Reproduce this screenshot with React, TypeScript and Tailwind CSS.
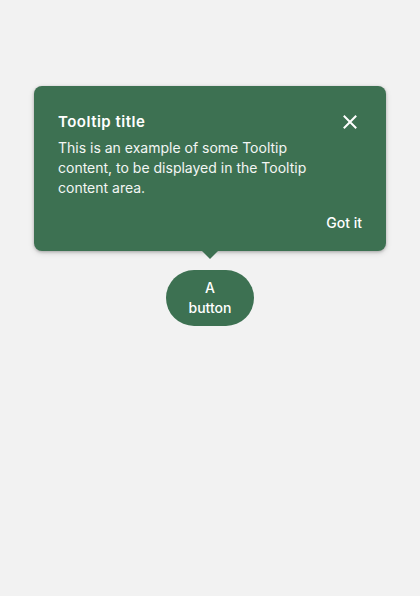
export default function App() {
  return (
    <div className="w-[420px] h-[596px] bg-[#f2f2f2] flex flex-col items-center pt-[86px]" style={{ fontFamily: 'Inter, Roboto, "Noto Sans", sans-serif' }}>
      <div className="relative w-[352px] rounded-[8px] bg-[#3d7152] text-white shadow-[0_1px_3px_rgba(0,0,0,0.25),0_2px_6px_rgba(0,0,0,0.12)] pt-[24px] pl-[24px] pr-[24px] pb-[11px]">
        <div className="flex items-center justify-between h-[24px]">
          <div className="text-[15px] font-semibold leading-[24px] tracking-[0.5px]">Tooltip title</div>
          <svg width="24" height="24" viewBox="0 0 24 24" fill="none" stroke="white" strokeWidth="2" strokeLinecap="square">
            <path d="M6.5 6.5 L17.5 17.5 M17.5 6.5 L6.5 17.5" />
          </svg>
        </div>
        <div className="mt-[4px] pr-[40px] text-[14px] leading-[20px] text-[#f3f6f4]">
          This is an example of some Tooltip content, to be displayed in the Tooltip content area.
        </div>
        <div className="flex justify-end mt-[6px]">
          <div className="h-[36px] flex items-center text-[14px] font-medium">Got it</div>
        </div>
        <div className="absolute left-1/2 -translate-x-1/2 top-full w-0 h-0 border-l-[8px] border-r-[8px] border-t-[8px] border-l-transparent border-r-transparent border-t-[#3d7152]" />
      </div>
      <div className="mt-[19px] w-[88px] h-[56px] rounded-full bg-[#3d7152] text-white flex items-center justify-center text-center text-[14px] font-medium leading-[20px] px-[20px]">
        A button
      </div>
    </div>
  );
}
